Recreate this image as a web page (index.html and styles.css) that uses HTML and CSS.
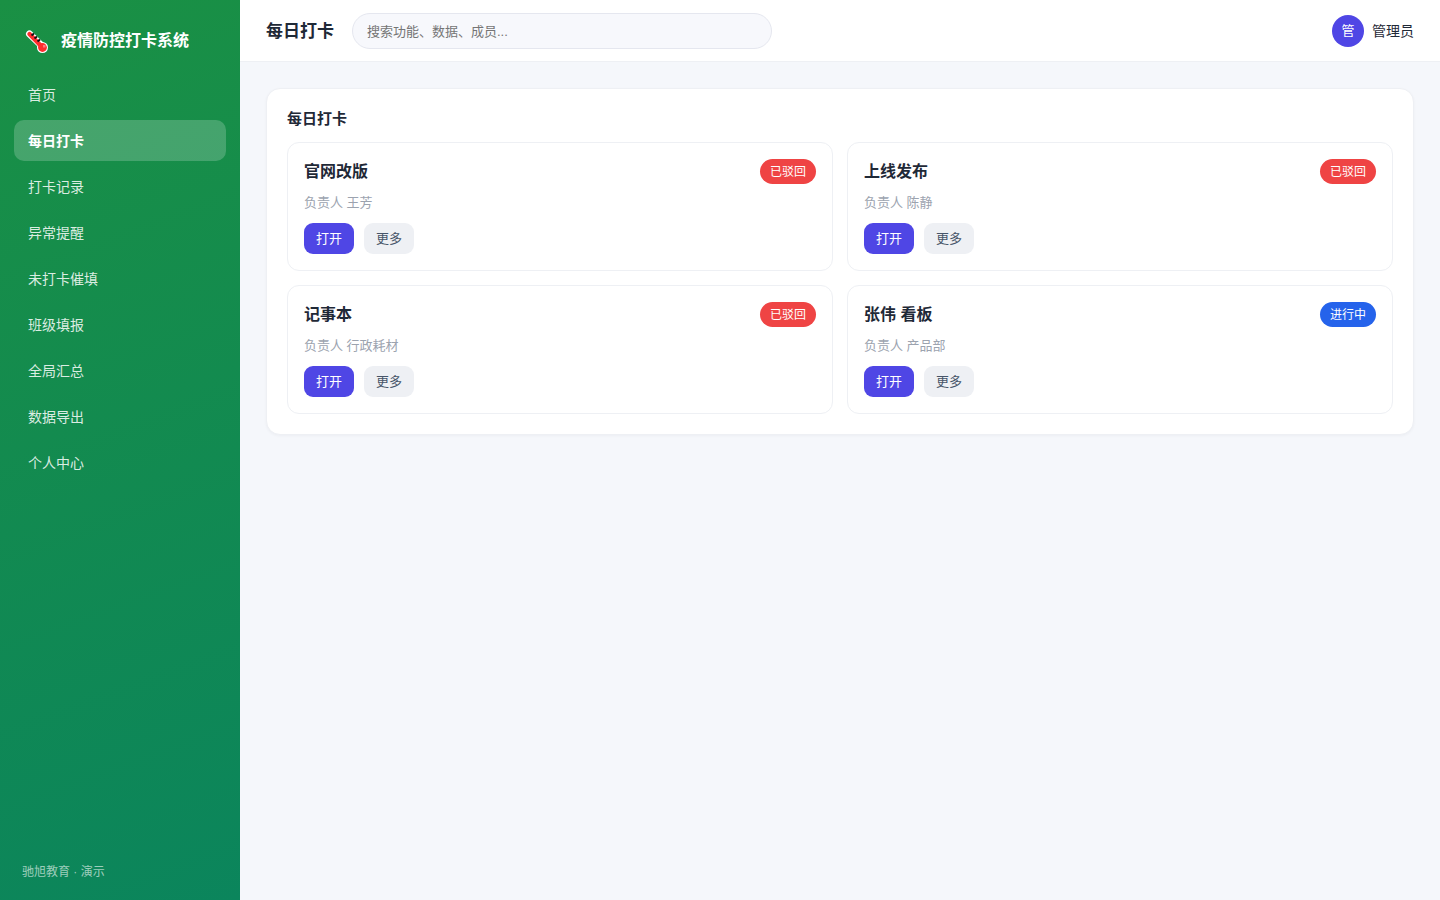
FILE: index.html
```html
<!DOCTYPE html>
<html lang="zh-CN">
<head>
  <meta charset="UTF-8" />
  <meta name="viewport" content="width=device-width, initial-scale=1.0" />
  <title>疫情防控打卡系统</title>
  <link rel="stylesheet" href="styles.css">
</head>
<body>
  <div class="layout">
    <aside class="sidebar">
      <div class="brand">
        <svg class="brand-icon" viewBox="0 0 24 24" aria-hidden="true">
          <path d="M4.5 5 L16 16" stroke="#fff" stroke-width="7" stroke-linecap="round" />
          <circle cx="17.5" cy="18.5" r="5.5" fill="#fff" />
          <path d="M4.5 5 L16 17" stroke="#ff2d2d" stroke-width="4.4" stroke-linecap="round" />
          <circle cx="17.5" cy="18.5" r="4.4" fill="#ff2d2d" />
          <path d="M6.5 6.5 L9 4.5 M9.5 9.5 L12 7.5 M12.5 12.5 L15 10.5" stroke="#111" stroke-width="2" />
          <rect x="18" y="16" width="2.5" height="2.5" fill="#ff7b7b" />
        </svg>
        <span>疫情防控打卡系统</span>
      </div>
      <nav class="nav">
        <a href="#">首页</a>
        <a href="#" class="active">每日打卡</a>
        <a href="#">打卡记录</a>
        <a href="#">异常提醒</a>
        <a href="#">未打卡催填</a>
        <a href="#">班级填报</a>
        <a href="#">全局汇总</a>
        <a href="#">数据导出</a>
        <a href="#">个人中心</a>
      </nav>
      <div class="sidebar-foot">驰旭教育 · 演示</div>
    </aside>

    <div class="main">
      <header class="topbar">
        <h1>每日打卡</h1>
        <input class="search" type="search" placeholder="搜索功能、数据、成员..." aria-label="搜索" />
        <div class="user">
          <span class="avatar">管</span>
          <span>管理员</span>
        </div>
      </header>

      <main class="content">
        <section class="panel">
          <h2>每日打卡</h2>
          <div class="grid">
            <article class="card">
              <div class="card-head">
                <h3>官网改版</h3>
                <span class="tag tag-red">已驳回</span>
              </div>
              <p class="meta">负责人 王芳</p>
              <div class="actions">
                <button type="button" class="btn btn-primary">打开</button>
                <button type="button" class="btn">更多</button>
              </div>
            </article>
            <article class="card">
              <div class="card-head">
                <h3>上线发布</h3>
                <span class="tag tag-red">已驳回</span>
              </div>
              <p class="meta">负责人 陈静</p>
              <div class="actions">
                <button type="button" class="btn btn-primary">打开</button>
                <button type="button" class="btn">更多</button>
              </div>
            </article>
            <article class="card">
              <div class="card-head">
                <h3>记事本</h3>
                <span class="tag tag-red">已驳回</span>
              </div>
              <p class="meta">负责人 行政耗材</p>
              <div class="actions">
                <button type="button" class="btn btn-primary">打开</button>
                <button type="button" class="btn">更多</button>
              </div>
            </article>
            <article class="card">
              <div class="card-head">
                <h3>张伟 看板</h3>
                <span class="tag tag-blue">进行中</span>
              </div>
              <p class="meta">负责人 产品部</p>
              <div class="actions">
                <button type="button" class="btn btn-primary">打开</button>
                <button type="button" class="btn">更多</button>
              </div>
            </article>
          </div>
        </section>
      </main>
    </div>
  </div>
</body>
</html>
```
FILE: styles.css
```css
* {
  box-sizing: border-box;
}
body {
  margin: 0;
  font-family: "Liberation Sans", "Noto Sans CJK SC", sans-serif;
  font-size: 14px;
  line-height: 20px;
  color: #1f2937;
  background: #f5f7fb;
}
h1, h2, h3, p {
  margin: 0;
}
.layout {
  display: flex;
  min-height: 100vh;
}

/* sidebar */
.sidebar {
  flex: 0 0 240px;
  display: flex;
  flex-direction: column;
  padding: 22px 14px 18px;
  color: #fff;
  background: linear-gradient(160deg, #1a9044, #0b855c);
}
.brand {
  display: flex;
  align-items: center;
  gap: 12px;
  padding: 6px 11px 20px;
  font-size: 16px;
  font-weight: 700;
  line-height: 26px;
}
.brand-icon {
  width: 24px;
  height: 24px;
  fill: none;
}
.nav {
  display: flex;
  flex-direction: column;
  gap: 5px;
}
.nav a {
  padding: 12px 14px 10px;
  line-height: 19px;
  border-radius: 10px;
  color: rgba(255, 255, 255, 0.85);
  text-decoration: none;
}
.nav a:hover {
  background: rgba(255, 255, 255, 0.1);
}
.nav a.active {
  color: #fff;
  font-weight: 700;
  background: rgba(255, 255, 255, 0.2);
}
.sidebar-foot {
  margin-top: auto;
  padding: 0 8px;
  font-size: 12px;
  color: rgba(255, 255, 255, 0.6);
}

/* top bar */
.main {
  flex: 1;
  min-width: 0;
}
.topbar {
  display: flex;
  align-items: center;
  gap: 18px;
  padding: 13px 26px 12px;
  background: #fff;
  border-bottom: 1px solid #eef0f4;
}
.topbar h1 {
  padding-top: 2px;
  font-size: 17px;
  line-height: 24px;
}
.search {
  width: 420px;
  height: 36px;
  padding: 0 14px;
  border: 1px solid #e5e7ef;
  border-radius: 18px;
  background: #f7f8fc;
  font-family: inherit;
  font-size: 13px;
  outline: none;
  appearance: none;
}
.search::placeholder {
  color: #757575;
}
.user {
  display: flex;
  align-items: center;
  gap: 8px;
  margin-left: auto;
}
.avatar {
  width: 32px;
  height: 32px;
  border-radius: 50%;
  background: #4f46e5;
  color: #fff;
  font-size: 13px;
  line-height: 32px;
  text-align: center;
}

/* content */
.content {
  padding: 26px;
}
.panel {
  padding: 20px;
  background: #fff;
  border: 1px solid #eef0f4;
  border-radius: 14px;
  box-shadow: 0 1px 3px rgba(16, 24, 40, 0.04);
}
.panel h2 {
  margin-bottom: 13px;
  font-size: 15px;
  line-height: 20px;
}
.grid {
  display: grid;
  grid-template-columns: 1fr 1fr;
  gap: 14px;
}
.card {
  padding: 16px;
  border: 1px solid #eef0f4;
  border-radius: 12px;
}
.card-head {
  display: flex;
  align-items: center;
  justify-content: space-between;
}
.card h3 {
  padding-top: 1px;
  font-size: 16px;
  line-height: 24px;
}
.tag {
  padding: 4px 10px 2px;
  border-radius: 13px;
  color: #fff;
  font-size: 12px;
  line-height: 19px;
}
.tag-red {
  background: #ef4444;
}
.tag-blue {
  background: #2563eb;
}
.meta {
  margin: 9px 0 10px;
  font-size: 13px;
  color: #9ca3af;
}
.actions {
  display: flex;
  gap: 10px;
}
.btn {
  padding: 6px 12px;
  border: none;
  border-radius: 9px;
  background: #eef0f4;
  color: #475569;
  font-family: inherit;
  font-size: 13px;
  line-height: 19px;
  cursor: pointer;
}
.btn-primary {
  background: #4f46e5;
  color: #fff;
}
```
